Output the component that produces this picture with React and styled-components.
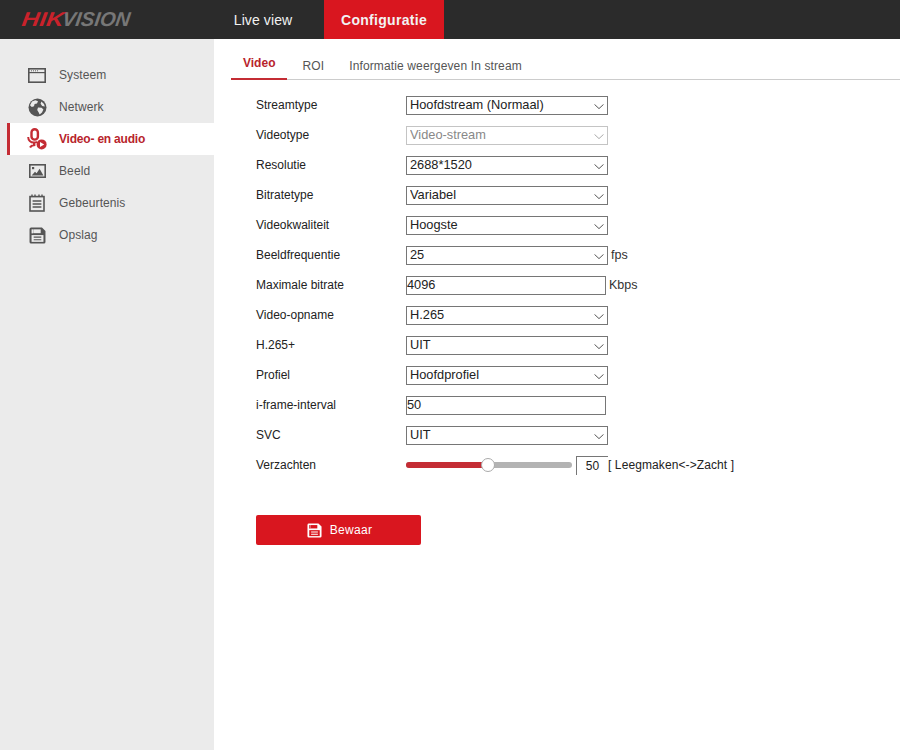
import React from "react";
import styled, { createGlobalStyle } from "styled-components";

const GlobalStyle = createGlobalStyle`
  html, body {
    margin: 0;
    padding: 0;
    background: #fff;
    font-family: "Liberation Sans", Arial, sans-serif;
  }
`;

const IconSystem = () => (
  <svg width="18" height="15" viewBox="0 0 18 15">
    <rect x="0.8" y="0.8" width="16.4" height="13.4" fill="none" stroke="#555" strokeWidth="1.6" />
    <path d="M1 4.6h16" stroke="#555" strokeWidth="1.2" />
    <path d="M3 2.8h1M5 2.8h1M7 2.8h1M9 2.8h1" stroke="#555" strokeWidth="0.9" />
  </svg>
);

const IconGlobe = () => (
  <svg width="19" height="19" viewBox="0 0 19 19">
    <circle cx="9.5" cy="9.5" r="9" fill="#555" />
    <path d="M4 3.6l3.4-1.4 2.6 1-1 2.2-2.4.6-.6 2.2L3.8 9 2 7.2zM10 9.4l3.6.4 1.8 1.8-1.4 3-2.4 2-1-2.4-1.4-2.2zM13.4 3.6l2.6 2.4.8 2.6-2.6-.6-1.6-2.2z" fill="#ebebeb" />
  </svg>
);

const IconMic = () => (
  <svg width="20" height="22" viewBox="0 0 20 22">
    <rect x="4.5" y="1.2" width="6.4" height="10.4" rx="3.2" fill="none" stroke="#c42c34" strokeWidth="2.4" />
    <path d="M1.2 9c0 3.2 2.4 5.4 5.6 5.6 1.2 0 2.4-.2 3.2-.7M7 14.7v2.3M3 19.6c1-1.8 2.4-2.6 5.4-2.6" fill="none" stroke="#c42c34" strokeWidth="2" />
    <circle cx="14.6" cy="16.4" r="5" fill="#c42c34" />
    <path d="M13 13.9l4.2 2.5-4.2 2.5z" fill="#fff" />
  </svg>
);

const IconImage = () => (
  <svg width="17" height="14" viewBox="0 0 17 14">
    <rect x="0.8" y="0.8" width="15.4" height="12.4" fill="none" stroke="#555" strokeWidth="1.6" />
    <rect x="3" y="3" width="2.2" height="2.2" fill="#555" />
    <path d="M2.6 11.4l3.4-3.6 1.6 1.4 3-4.4 3.8 6.6z" fill="#555" />
  </svg>
);

const IconEvent = () => (
  <svg width="16" height="18" viewBox="0 0 16 18">
    <rect x="1" y="2.6" width="14" height="14.4" fill="none" stroke="#555" strokeWidth="1.6" />
    <path d="M3 0.6v2.4M6 0.6v2.4M10 0.6v2.4M13 0.6v2.4" stroke="#555" strokeWidth="1.4" />
    <path d="M3.6 7h8.8M3.6 10h8.8M3.6 13h8.8" stroke="#555" strokeWidth="1.4" />
  </svg>
);

const IconSave = ({ color, hole, size }) => (
  <svg width={size} height={size} viewBox="0 0 16 16">
    <path d="M0.5 2a1.5 1.5 0 0 1 1.5-1.5h10.2L15.5 3.8V14a1.5 1.5 0 0 1-1.5 1.5H2A1.5 1.5 0 0 1 .5 14z" fill={color} />
    <rect x="2.4" y="2.2" width="1.4" height="3.8" fill={hole} />
    <rect x="4" y="2.2" width="7" height="3.6" fill={hole} />
    <rect x="2.4" y="7.6" width="11.2" height="6.4" fill={hole} />
    <path d="M4.4 9.6h7.2M4.4 12h7.2" stroke={color} strokeWidth="1.1" />
  </svg>
);

const Chevron = () => (
  <ChevronSvg width="10" height="5" viewBox="0 0 10 5">
    <path d="M.5.4L5 4.6 9.5.4" fill="none" stroke="currentColor" strokeWidth="1" />
  </ChevronSvg>
);

const menu = [
  { label: "Systeem", icon: <IconSystem /> },
  { label: "Netwerk", icon: <IconGlobe /> },
  { label: "Video- en audio", icon: <IconMic />, active: true },
  { label: "Beeld", icon: <IconImage /> },
  { label: "Gebeurtenis", icon: <IconEvent /> },
  { label: "Opslag", icon: <IconSave color="#555" hole="#ebebeb" size={17} /> },
];

const fields = [
  { label: "Streamtype", value: "Hoofdstream (Normaal)" },
  { label: "Videotype", value: "Video-stream", disabled: true },
  { label: "Resolutie", value: "2688*1520" },
  { label: "Bitratetype", value: "Variabel" },
  { label: "Videokwaliteit", value: "Hoogste" },
  { label: "Beeldfrequentie", value: "25", unit: "fps" },
  { label: "Maximale bitrate", value: "4096", input: true, unit: "Kbps" },
  { label: "Video-opname", value: "H.265" },
  { label: "H.265+", value: "UIT" },
  { label: "Profiel", value: "Hoofdprofiel" },
  { label: "i-frame-interval", value: "50", input: true },
  { label: "SVC", value: "UIT" },
];

export default function App() {
  return (
    <Page>
      <GlobalStyle />
      <Header>
        <Logo>
          <LogoText>
            <b>HIK</b>VISION
          </LogoText>
        </Logo>
        <HeaderLink>Live view</HeaderLink>
        <HeaderLink $active>Configuratie</HeaderLink>
      </Header>
      <Body>
        <Sidebar>
          {menu.map((m) => (
            <MenuItem key={m.label} $active={m.active}>
              <MenuIcon>{m.icon}</MenuIcon>
              {m.label}
            </MenuItem>
          ))}
        </Sidebar>
        <Main>
          <Tabs>
            <Tab $active>Video</Tab>
            <Tab>ROI</Tab>
            <Tab>Informatie weergeven In stream</Tab>
          </Tabs>
          <Form>
            {fields.map((f) => (
              <Row key={f.label}>
                <Label>{f.label}</Label>
                {f.input ? (
                  <TextInput defaultValue={f.value} />
                ) : (
                  <SelectWrap $disabled={f.disabled}>
                    <Select disabled={f.disabled} defaultValue={f.value}>
                      <option>{f.value}</option>
                    </Select>
                    <Chevron />
                  </SelectWrap>
                )}
                {f.unit && <Unit>{f.unit}</Unit>}
              </Row>
            ))}
            <Row>
              <Label>Verzachten</Label>
              <Slider>
                <SliderFill />
                <SliderThumb />
              </Slider>
              <SliderValue>50</SliderValue>
              <SliderHint>[ Leegmaken&lt;-&gt;Zacht ]</SliderHint>
            </Row>
            <SaveButton type="button">
              <IconSave color="#fff" hole="#d9161f" size={15} />
              Bewaar
            </SaveButton>
          </Form>
        </Main>
      </Body>
    </Page>
  );
}

const Page = styled.div`
  width: 900px;
  height: 750px;
  overflow: hidden;
  display: flex;
  flex-direction: column;
  font-size: 12px;
  color: #222;
`;

const Header = styled.div`
  height: 39px;
  background: #2b2b2b;
  display: flex;
  align-items: stretch;
  flex-shrink: 0;
`;

const Logo = styled.div`
  width: 213px;
  padding-left: 22px;
  box-sizing: border-box;
`;

const LogoText = styled.div`
  display: inline-block;
  transform: skewX(-8deg);
  line-height: 38px;
  font-size: 20px;
  font-style: italic;
  font-weight: 700;
  color: #777;

  b {
    display: inline-block;
    color: #c9222b;
    transform: scaleX(1.22);
    transform-origin: left center;
    margin-right: 6px;
  }
`;

const HeaderLink = styled.div`
  display: flex;
  align-items: center;
  justify-content: center;
  font-size: 14px;
  color: #f2f2f2;
  width: ${(p) => (p.$active ? "120px" : "100px")};
  margin-left: ${(p) => (p.$active ? "11px" : "0")};
  background: ${(p) => (p.$active ? "#d9161f" : "transparent")};
  font-weight: ${(p) => (p.$active ? 700 : 400)};
  letter-spacing: ${(p) => (p.$active ? "0.3px" : "0.1px")};
`;

const Body = styled.div`
  flex: 1;
  display: flex;
`;

const Sidebar = styled.div`
  width: 214px;
  flex-shrink: 0;
  background: #ebebeb;
  padding-top: 20px;
  box-sizing: border-box;
`;

const MenuItem = styled.div`
  height: 32px;
  margin-left: 7px;
  display: flex;
  align-items: center;
  box-sizing: border-box;
  border-left: 3px solid ${(p) => (p.$active ? "#c42c34" : "transparent")};
  background: ${(p) => (p.$active ? "#fff" : "transparent")};
  color: ${(p) => (p.$active ? "#b8242c" : "#555")};
  font-weight: ${(p) => (p.$active ? 700 : 400)};
  letter-spacing: ${(p) => (p.$active ? "-0.2px" : "0.1px")};
`;

const MenuIcon = styled.span`
  width: 20px;
  margin-left: 17px;
  margin-right: 12px;
  display: flex;
  justify-content: center;
  align-items: center;
`;

const Main = styled.div`
  flex: 1;
  min-width: 0;
`;

const Tabs = styled.div`
  height: 41px;
  box-sizing: border-box;
  margin-left: 17px;
  padding-top: 11px;
  display: flex;
  border-bottom: 1px solid #ccc;
`;

const Tab = styled.div`
  height: 30px;
  box-sizing: border-box;
  padding: ${(p) => (p.$active ? "6px 12px 0" : "9px 0 0 15px")};
  margin-right: ${(p) => (p.$active ? "0" : "10px")};
  border-bottom: 2px solid ${(p) => (p.$active ? "#c42c34" : "transparent")};
  color: ${(p) => (p.$active ? "#b8242c" : "#555")};
  font-weight: ${(p) => (p.$active ? 700 : 400)};
  letter-spacing: ${(p) => (p.$active ? "0" : "0.13px")};
`;

const Form = styled.div`
  padding: 10px 0 0 42px;
`;

const Row = styled.div`
  height: 30px;
  display: flex;
  align-items: center;
`;

const Label = styled.div`
  width: 150px;
  flex-shrink: 0;
  color: #222;
`;

const SelectWrap = styled.div`
  position: relative;
  width: 202px;
  height: 19px;
  color: ${(p) => (p.$disabled ? "#aaa" : "#555")};
`;

const ChevronSvg = styled.svg`
  position: absolute;
  right: 4px;
  top: 8px;
  pointer-events: none;
`;

const Select = styled.select`
  appearance: none;
  width: 100%;
  height: 100%;
  box-sizing: border-box;
  margin: 0;
  padding: 0 0 2px 3px;
  border: 1px solid #767676;
  border-radius: 0;
  background: #fff;
  color: #222;
  font: 12.8px "Liberation Sans", Arial, sans-serif;
  outline: none;
  opacity: 1;

  &:disabled {
    border-color: #c4c4c4;
    color: #888;
  }
`;

const TextInput = styled.input`
  width: 200px;
  height: 19px;
  box-sizing: border-box;
  margin: 0;
  padding: 0 0 2px;
  border: 1px solid #767676;
  border-radius: 0;
  color: #222;
  font: 12.8px "Liberation Sans", Arial, sans-serif;
  outline: none;
`;

const Unit = styled.span`
  margin-left: 3px;
  color: #333;
  font-size: 12.5px;
`;

const Slider = styled.div`
  position: relative;
  width: 166px;
  height: 6px;
  border-radius: 3px;
  background: #b3b3b3;
`;

const SliderFill = styled.div`
  width: 82px;
  height: 100%;
  border-radius: 3px 0 0 3px;
  background: #c42c34;
`;

const SliderThumb = styled.div`
  position: absolute;
  left: 75px;
  top: -4px;
  width: 14px;
  height: 14px;
  box-sizing: border-box;
  border: 1px solid #aaa;
  border-radius: 50%;
  background: #fff;
`;

const SliderValue = styled.div`
  width: 32px;
  height: 19px;
  box-sizing: border-box;
  margin-left: 4px;
  border-top: 1px solid #767676;
  border-left: 1px solid #767676;
  text-align: center;
  line-height: 18px;
  color: #222;
`;

const SliderHint = styled.span`
  color: #222;
  letter-spacing: 0.1px;
`;

const SaveButton = styled.button`
  margin-top: 35px;
  width: 165px;
  height: 30px;
  display: flex;
  align-items: center;
  justify-content: center;
  gap: 8px;
  border: 0;
  border-radius: 2px;
  padding: 0 0 0 2px;
  background: #d9161f;
  color: #fff;
  font: 12px "Liberation Sans", Arial, sans-serif;
  letter-spacing: 0.3px;
`;
